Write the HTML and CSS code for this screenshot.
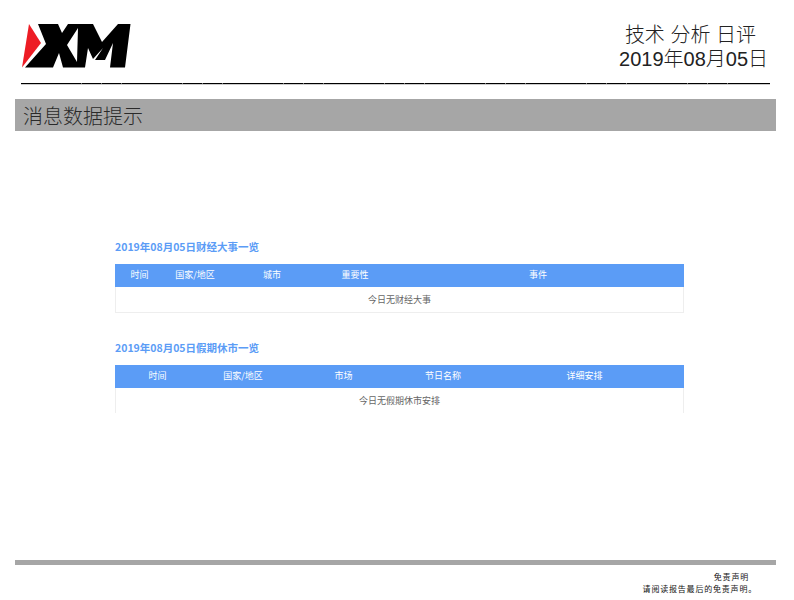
FILE: index.html
```html
<!DOCTYPE html>
<html lang="zh">
<head>
<meta charset="utf-8">
<title>技术分析日评</title>
<link rel="stylesheet" href="styles.css">
</head>
<body>
<div class="page">
  <header class="head">
    <svg class="logo" width="110" height="46" viewBox="0 0 110 46">
      <polygon fill="#ed1c24" points="7,1 19,20 0,44.5"/>
      <path fill="#000" fill-rule="evenodd" d="M16 1H36L40 10L46 1H71L80 19L96 1H108.500L103 44.500H88L91 20L83 37H73L81 25L71 36L66 25L63 44.500H41L37 30L31 44.500H3L24 21ZM56 5L45 22L55 39Z"/>
    </svg>
    <div class="title">
      <div class="title-main">技术 分析 日评</div>
      <div class="title-date">2019年08月05日</div>
    </div>
  </header>
  <div class="rule"></div>
  <h1 class="bar">消息数据提示</h1>
  <main class="content">
    <h2 class="cap">2019年08月05日财经大事一览</h2>
    <div class="table first">
      <div class="thead t1">
        <span>时间</span><span>国家/地区</span><span>城市</span><span>重要性</span><span>事件</span>
      </div>
      <div class="tbody">今日无财经大事</div>
    </div>
    <h2 class="cap">2019年08月05日假期休市一览</h2>
    <div class="table second">
      <div class="thead t2">
        <span>时间</span><span>国家/地区</span><span>市场</span><span>节日名称</span><span>详细安排</span>
      </div>
      <div class="tbody">今日无假期休市安排</div>
    </div>
  </main>
  <footer class="foot">
    <div class="foot-bar"></div>
    <div class="foot-text">
      <div class="foot-a">免责声明</div>
      <div class="foot-b">请阅读报告最后的免责声明。</div>
    </div>
  </footer>
</div>
</body>
</html>
```
FILE: styles.css
```css
* { box-sizing: border-box; }
html, body { margin: 0; padding: 0; background: #fff; }
body { font-family: "Liberation Sans", "Noto Sans CJK SC", sans-serif; overflow: hidden; }
.page { width: 794px; height: 600px; padding-top: 23px; display: flex; flex-direction: column; }
.head { display: flex; justify-content: space-between; align-items: flex-start; height: 60px; padding: 0 26px 0 22px; }
.logo { display: block; }
.title { text-align: right; color: #222; font-size: 20px; line-height: 24px; font-weight: 300; }
.title-main { padding-right: 12px; }
.rule { height: 1px; margin: 0 24px 0 21px; background: repeating-linear-gradient(90deg, #000 0 19.6px, #777 19.6px 20.2px); box-shadow: 0 1px 0 #ccc; }
.bar { margin: 15px 18px 0 15px; height: 32px; background: #a6a6a6; color: #2a2a2a; font-size: 20px; font-weight: 300; line-height: 36px; padding-left: 8px; }
.content { margin: 0 110px 0 115px; padding-top: 108px; height: 429px; overflow: hidden; flex: none; }
.cap { margin: 0; font-size: 10.5px; line-height: 16px; font-weight: 700; color: #5b9cf6; font-family: "Noto Sans CJK SC", sans-serif; }
.table { border: 1px solid #eee; border-top: 0; color: #666; font-size: 9px; font-family: "Noto Sans CJK SC", sans-serif; }
.first { margin-top: 9px; margin-bottom: 27px; }
.second { margin-top: 9px; border-bottom: 0; }
.thead { height: 23px; background: #5b9cf6; color: #fff; line-height: 22px; display: grid; margin: 0 -1px; text-align: center; }
.t1 { grid-template-columns: 49px 62px 92px 74px 292px; }
.t2 { grid-template-columns: 85px 86px 115px 84px 199px; }
.tbody { height: 25px; line-height: 25px; text-align: center; }
.foot-bar { height: 5px; margin: 0 18px 0 15px; background: #a6a6a6; }
.foot-text { padding-right: 37px; text-align: right; font-size: 8px; line-height: 12px; color: #111; margin-top: 6px; font-family: "Noto Sans CJK SC", sans-serif; letter-spacing: 0.8px; }
.foot-a { margin-right: 8px; }
```
